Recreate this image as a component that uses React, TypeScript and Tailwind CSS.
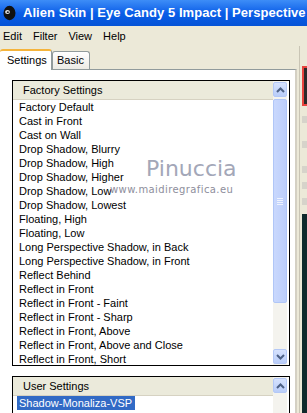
import React from 'react';

const factoryItems = [
  'Factory Default',
  'Cast in Front',
  'Cast on Wall',
  'Drop Shadow, Blurry',
  'Drop Shadow, High',
  'Drop Shadow, Higher',
  'Drop Shadow, Low',
  'Drop Shadow, Lowest',
  'Floating, High',
  'Floating, Low',
  'Long Perspective Shadow, in Back',
  'Long Perspective Shadow, in Front',
  'Reflect Behind',
  'Reflect in Front',
  'Reflect in Front - Faint',
  'Reflect in Front - Sharp',
  'Reflect in Front, Above',
  'Reflect in Front, Above and Close',
  'Reflect in Front, Short',
];

const Arrow: React.FC<{ up?: boolean }> = ({ up }) => (
  <svg width="9" height="6" viewBox="0 0 9 6">
    <path
      d={up ? 'M1 5 L4.5 1.5 L8 5' : 'M1 1 L4.5 4.5 L8 1'}
      fill="none"
      stroke="#4d6185"
      strokeWidth="2"
    />
  </svg>
);

const ScrollButton: React.FC<{ up?: boolean }> = ({ up }) => (
  <div className="h-[15px] rounded-[2px] border border-[#b4c8f6] bg-gradient-to-b from-[#d6e2fd] to-[#b9cdf9] flex items-center justify-center">
    <Arrow up={up} />
  </div>
);

const ScrollBar: React.FC<{ thumb?: number; full?: boolean }> = ({ thumb, full }) => (
  <div className="w-[14px] h-full flex flex-col py-[1px] bg-[#f4f3ee] shrink-0">
    <ScrollButton up />
    {thumb ? (
      <div
        className="mt-[2px] rounded-[2px] border border-[#b0c6f7] bg-gradient-to-r from-[#c9d8fd] to-[#bccefb] flex flex-col items-center justify-center gap-[1px]"
        style={{ height: thumb }}
      >
        <div className="w-[6px] h-[1px] bg-[#eef3fe]" />
        <div className="w-[6px] h-[1px] bg-[#eef3fe]" />
        <div className="w-[6px] h-[1px] bg-[#eef3fe]" />
        <div className="w-[6px] h-[1px] bg-[#eef3fe]" />
      </div>
    ) : null}
    <div className="flex-1" />
    {full ? <ScrollButton /> : null}
  </div>
);

const ListBox: React.FC<{ title: string; items: string[]; selected?: number; height: string; thumb?: number; full?: boolean }> = ({
  title,
  items,
  selected,
  height,
  thumb,
  full,
}) => (
  <div className={`w-[278px] ${height} border border-black bg-white flex overflow-hidden shrink-0`}>
    <div className="flex-1 flex flex-col overflow-hidden">
      <div className="h-[19px] shrink-0 bg-[#ebeadb] border-b border-[#d6d2c2] pl-[10px] flex items-center text-[11px] text-black">
        {title}
      </div>
      <div className="flex flex-col pl-[4px]">
        {items.map((it, i) => (
          <div key={it} className="h-[14px] leading-[14px] text-[11px] text-black whitespace-nowrap">
            <span className={i === selected ? 'bg-[#316ac5] text-white pl-[2px] pr-[3px] inline-block' : 'pl-[2px]'}>{it}</span>
          </div>
        ))}
      </div>
    </div>
    <ScrollBar thumb={thumb} full={full} />
    <div className="w-[2px] shrink-0" />
  </div>
);

export default function App() {
  return (
    <div
      className="w-[307px] h-[413px] overflow-hidden bg-[#ece9d8] flex flex-col relative"
      style={{ fontFamily: '"Liberation Sans", Arial, sans-serif' }}
    >
      {/* title bar */}
      <div className="h-[26px] shrink-0 bg-gradient-to-b from-[#3d8df7] via-[#0a5ee8] to-[#0553d6] flex items-center pl-[3px] gap-[7px] overflow-hidden">
        <svg width="13" height="16" viewBox="0 0 13 16" className="shrink-0">
          <ellipse cx="6.5" cy="8" rx="6" ry="7.2" fill="#111" />
          <ellipse cx="4.5" cy="7" rx="2.4" ry="2" fill="#e8e8e8" />
          <ellipse cx="4.8" cy="7.2" rx="1.1" ry="0.9" fill="#222" />
        </svg>
        <span className="text-white font-bold text-[13px] whitespace-nowrap tracking-[0.05px]">
          Alien Skin | Eye Candy 5 Impact | Perspective
        </span>
      </div>

      {/* menu bar */}
      <div className="h-[20px] shrink-0 flex items-center pl-[3px] gap-[11px] text-[11px] text-black">
        <span>Edit</span>
        <span>Filter</span>
        <span>View</span>
        <span>Help</span>
      </div>

      <div className="flex-1 flex">
        <div className="w-[297px] flex flex-col">
          {/* tabs */}
          <div className="h-[23px] shrink-0 flex items-end">
            <div className="w-[52px] h-[21px] bg-white border-t-[2px] border-t-[#f5b43c] border-r border-r-[#919b9c] rounded-t-[3px] flex items-center pl-[7px] text-[11px] text-black relative z-10 -mb-[1px]">
              Settings
            </div>
            <div className="w-[38px] h-[18px] bg-gradient-to-b from-white to-[#ecebe5] border border-b-0 border-[#919b9c] rounded-t-[3px] flex items-center pl-[4px] text-[11px] text-black">
              Basic
            </div>
          </div>
          {/* panel */}
          <div className="flex-1 bg-white border-t border-[#919b9c] border-r-[2px] border-r-[#d4d0c4] pl-[12px] pt-[10px] flex flex-col gap-[10px]">
            <ListBox title="Factory Settings" items={factoryItems} height="h-[286px]" thumb={204} full />
            <ListBox title="User Settings" items={['Shadow-Monaliza-VSP']} selected={0} height="h-[60px]" />
          </div>
        </div>
        {/* right edge of preview area */}
        <div className="flex-1 flex">
          <div className="w-[3px] border-r border-[#c9c5b5]" />
          <div className="flex-1 flex flex-col pt-[20px] pl-[2px]">
            <div className="h-[40px] border-2 border-r-0 border-[#e8443e] bg-[#2a2a2a] shrink-0" />
            <div className="h-[10px]" />
            <div className="h-[7px] bg-[#d6d3ca]" />
            <div className="h-[18px]" />
            <div className="h-[7px] bg-[#d6d3ca]" />
            <div className="h-[18px]" />
            <div className="h-[7px] bg-[#d6d3ca]" />
            <div className="h-[9px]" />
            <div className="h-[7px] bg-[#d6d3ca]" />
            <div className="h-[9px]" />
            <div className="h-[7px] bg-[#d6d3ca]" />
            <div className="h-[9px]" />
            <div className="flex-1 bg-[#0f2a2c]" />
          </div>
        </div>
      </div>

      {/* watermark */}
      <div
        className="absolute left-[146px] top-[158px] text-[22px] leading-none text-[#a3a7b8] pointer-events-none"
        style={{ fontFamily: '"DejaVu Sans", sans-serif' }}
      >
        Pinuccia
      </div>
      <div
        className="absolute left-[110px] top-[185px] text-[10px] leading-none tracking-[0.4px] text-[#8e8e9c] pointer-events-none"
        style={{ fontFamily: '"DejaVu Sans", sans-serif' }}
      >
        www.maidiregrafica.eu
      </div>
    </div>
  );
}
